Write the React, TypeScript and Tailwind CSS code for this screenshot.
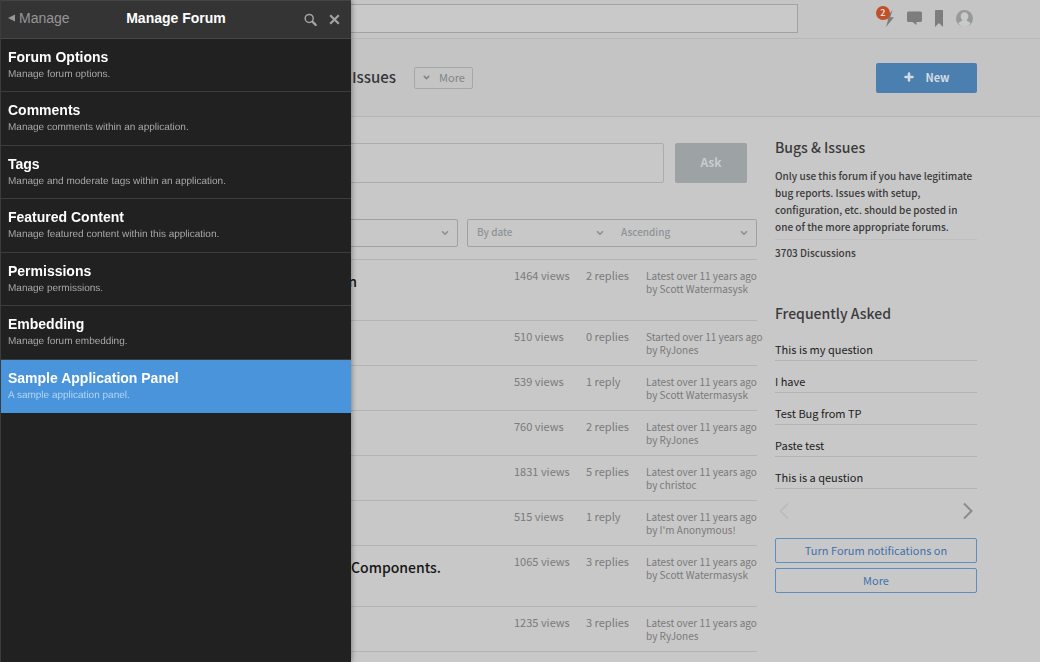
import React from 'react';
import { ChevronDown, Plus } from 'lucide-react';

interface PanelItem {
    title: string;
    description: string;
}

interface Thread {
    title?: string;
    titleAlign?: string;
    tall?: boolean;
    views: string;
    replies: string;
    activity: string;
    author: string;
}

const panelItems: PanelItem[] = [
    { title: 'Forum Options', description: 'Manage forum options.' },
    { title: 'Comments', description: 'Manage comments within an application.' },
    { title: 'Tags', description: 'Manage and moderate tags within an application.' },
    { title: 'Featured Content', description: 'Manage featured content within this application.' },
    { title: 'Permissions', description: 'Manage permissions.' },
    { title: 'Embedding', description: 'Manage forum embedding.' },
    { title: 'Sample Application Panel', description: 'A sample application panel.' }
];

const threads: Thread[] = [
    { title: 'n', titleAlign: 'pr-[157px]', tall: true, views: '1464 views', replies: '2 replies', activity: 'Latest over 11 years ago', author: 'by Scott Watermasysk' },
    { views: '510 views', replies: '0 replies', activity: 'Started over 11 years ago', author: 'by RyJones' },
    { views: '539 views', replies: '1 reply', activity: 'Latest over 11 years ago', author: 'by Scott Watermasysk' },
    { views: '760 views', replies: '2 replies', activity: 'Latest over 11 years ago', author: 'by RyJones' },
    { views: '1831 views', replies: '5 replies', activity: 'Latest over 11 years ago', author: 'by christoc' },
    { views: '515 views', replies: '1 reply', activity: 'Latest over 11 years ago', author: "by I'm Anonymous!" },
    { title: 'Components.', titleAlign: 'pr-[73px]', tall: true, views: '1065 views', replies: '3 replies', activity: 'Latest over 11 years ago', author: 'by Scott Watermasysk' },
    { views: '1235 views', replies: '3 replies', activity: 'Latest over 11 years ago', author: 'by RyJones' }
];

const questions = ['This is my question', 'I have', 'Test Bug from TP', 'Paste test', 'This is a qeustion'];

const AdminPanel: React.FC = () => (
    <aside className="fixed inset-y-0 left-0 z-10 w-[351px] border-l border-[#3c3c3c] bg-[#212121] font-['Liberation_Sans',sans-serif] shadow-[1px_0_5px_rgba(0,0,0,0.35)]">
        <header className="grid h-[39px] grid-cols-[1fr_auto_1fr] items-center border-t border-b border-t-[#444] border-b-[#474747] bg-[#343434] px-[7px] pb-1">
            <button className="flex items-center gap-1 text-sm leading-5 text-[#969696]">
                <svg width="7" height="8" viewBox="0 0 7 8" fill="currentColor" aria-hidden="true">
                    <path d="M0 4 7 0.5v7z" />
                </svg>
                Manage
            </button>
            <h2 className="text-sm font-bold leading-5 text-white">Manage Forum</h2>
            <div className="flex items-center justify-end gap-3 pt-1 pr-1 text-[#a3a3a3]">
                <button aria-label="Search">
                    <svg width="13" height="13" viewBox="0 0 13 13" fill="none" stroke="currentColor" aria-hidden="true">
                        <circle cx="5.2" cy="5.4" r="4" strokeWidth="1.5" />
                        <path d="m8.4 8.6 3.3 3.3" strokeWidth="2.2" strokeLinecap="round" />
                    </svg>
                </button>
                <button aria-label="Close">
                    <svg width="11" height="11" viewBox="0 0 11 11" fill="none" stroke="currentColor" strokeWidth="2.2" aria-hidden="true">
                        <path d="m1.2 1.2 8.6 8.6m0-8.6L1.2 9.8" />
                    </svg>
                </button>
            </div>
        </header>
        <ul className="grid min-h-[374px] auto-rows-fr">
            {panelItems.map((item, i) => (
                <li
                    key={item.title}
                    className={i === panelItems.length - 1 ? 'bg-[#4a94db]' : 'border-b border-[#3c3c3c]'}
                >
                    <a href="#" className="block px-[7px] pt-2">
                        <span className="block text-sm font-bold leading-5 text-white">{item.title}</span>
                        <span
                            className={`block text-[10px] leading-4 [text-rendering:geometricPrecision] ${
                                i === panelItems.length - 1 ? 'text-[#b4d5f3]' : 'text-[#a8a8a8]'
                            }`}
                        >
                            {item.description}
                        </span>
                    </a>
                </li>
            ))}
        </ul>
    </aside>
);

const TopBar: React.FC = () => (
    <div className="border-b border-[#b8b8b8] bg-[#c5c5c5]">
        <div className="mx-auto flex h-[38px] max-w-[914px] items-center justify-between pb-0.5">
            <input
                type="search"
                aria-label="Search"
                className="h-[29px] w-[735px] border border-[#a2a2a2] bg-[#c9c9c9] px-2 outline-none"
            />
            <div className="flex items-center gap-[13px] pr-1 text-[#7d7d7d]">
                <button aria-label="Notifications" className="relative">
                    <svg width="10" height="17" viewBox="0 0 10 17" fill="currentColor" aria-hidden="true">
                        <path d="M8.5 0 1 9.2h3.2L2 17 10 7.3H6.3z" />
                    </svg>
                    <span className="absolute -left-2 -top-1 size-[14px] rounded-full bg-[#c34e28] text-center font-['Noto_Sans_CJK_SC',sans-serif] text-[9px] font-bold leading-[13px] text-[#dedede]">
                        2
                    </span>
                </button>
                <button aria-label="Conversations">
                    <svg width="15" height="14" viewBox="0 0 15 14" fill="currentColor" aria-hidden="true">
                        <path d="M1.5 0.5h12q1.5 0 1.5 1.5v7.5q0 1.5-1.5 1.5H9.5V14l-4-3H1.5Q0 11 0 9.5V2Q0 0.5 1.5 0.5z" />
                    </svg>
                </button>
                <button aria-label="Bookmarks">
                    <svg width="8" height="17" viewBox="0 0 8 17" fill="currentColor" aria-hidden="true">
                        <path d="M0 1q0-1 1-1h6q1 0 1 1v16l-4-4-4 4z" />
                    </svg>
                </button>
                <button aria-label="Profile">
                    <svg width="17" height="17" viewBox="0 0 17 17" aria-hidden="true">
                        <circle cx="8.5" cy="8.5" r="8.5" fill="#969a9d" />
                        <path
                            d="M8.5 2.2c2.5 0 3.8 1.7 3.8 4 0 1.6-.7 2.900-1.700 3.700 0 1.400 3 1.500 4 3.300C13.300 15.600 11 17 8.500 17s-4.800-1.400-6.100-3.800c1-1.800 4-1.900 4-3.300-1-.8-1.700-2.100-1.700-3.700 0-2.300 1.300-4 3.800-4z"
                            fill="#c9c9c9"
                        />
                    </svg>
                </button>
            </div>
        </div>
    </div>
);

const Banner: React.FC = () => (
    <div className="border-b border-[#b5b5b5] bg-[#c4c4c4]">
        <div className="mx-auto flex h-[77px] max-w-[914px] items-center">
            <h1 className="w-[333px] pb-px text-right text-[15px] font-medium leading-6 text-[#363638]">Issues</h1>
            <button className="ml-[18px] flex h-[22px] w-[59px] items-center justify-center gap-2 rounded-xs border border-[#a5a8aa] pb-px text-[11px] leading-4 text-[#7e8488]">
                <ChevronDown size={9} strokeWidth={4} />
                More
            </button>
            <button className="ml-auto flex h-[30px] w-[101px] items-center justify-center gap-2.5 rounded-xs bg-[#4b7fb0] pb-px text-[11px] font-bold leading-4 text-[#d5dbe1]">
                <Plus size={12} strokeWidth={5} />
                New
            </button>
        </div>
    </div>
);

interface DropDownProps {
    label: string;
    value: string;
    className: string;
}

const DropDown: React.FC<DropDownProps> = ({ label, value, className }) => (
    <div className={`relative ${className}`}>
        <select
            aria-label={label}
            className="block h-[23px] w-full appearance-none bg-transparent px-[9px] text-[10px] leading-4 font-medium text-[#8f9396] outline-none"
        >
            <option>{value}</option>
        </select>
        <ChevronDown
            size={10}
            strokeWidth={4}
            className="pointer-events-none absolute top-2 right-[7px] text-[#8b9094]"
        />
    </div>
);

const ThreadTable: React.FC = () => (
    <table className="mt-3 w-full table-fixed border-separate border-spacing-0 border-t border-[#b3b3b3] text-left text-[#7a7a7a]">
        <colgroup>
            <col />
            <col className="w-[72px]" />
            <col className="w-[60px]" />
            <col className="w-[111px]" />
        </colgroup>
        <tbody>
            {threads.map((thread) => (
                <tr key={thread.views} className={thread.tall ? 'h-[61px]' : 'h-[45px]'}>
                    <td className={`border-b border-[#b3b3b3] pt-2 text-right align-top ${thread.titleAlign ?? ''}`}>
                        {thread.title && (
                            <a href="#" className="text-sm font-medium leading-6 text-[#161616]">
                                {thread.title}
                            </a>
                        )}
                    </td>
                    <td className="border-b border-[#b3b3b3] pt-[9px] align-top text-[11px] leading-[13px]">{thread.views}</td>
                    <td className="border-b border-[#b3b3b3] pt-[9px] align-top text-[11px] leading-[13px]">{thread.replies}</td>
                    <td className="border-b border-[#b3b3b3] pt-[9px] align-top text-[10px] leading-[13px] whitespace-nowrap">
                        {thread.activity}
                        <br />
                        {thread.author}
                    </td>
                </tr>
            ))}
        </tbody>
    </table>
);

const Sidebar: React.FC = () => (
    <aside className="w-[202px] shrink-0 pt-[18px] text-[11px] leading-[17px] text-[#3b3b3b]">
        <h3 className="text-sm font-medium leading-6">Bugs &amp; Issues</h3>
        <div className="text-[10px] font-medium leading-[17px]">
            <p className="mt-2 border-b border-[#bfbfbf] pb-1">
                Only use this forum if you have legitimate bug reports. Issues with setup, configuration, etc. should be
                posted in one of the more appropriate forums.
            </p>
            <p className="mt-1">3703 Discussions</p>
        </div>

        <h3 className="mt-10 text-sm font-medium leading-6">Frequently Asked</h3>
        <ul className="mt-1">
            {questions.map((question) => (
                <li key={question} className="border-b border-[#b3b3b3] pt-3 pb-0.5">
                    <a href="#" className="block text-[#1d1d1d]">
                        {question}
                    </a>
                </li>
            ))}
        </ul>
        <div className="mt-3 flex justify-between px-1">
            <button aria-label="Previous" className="text-[#b9b9b9]">
                <svg width="10" height="20" viewBox="0 0 10 20" fill="none" stroke="currentColor" strokeWidth="1.5" aria-hidden="true">
                    <path d="M9 2.5 1.5 10 9 17.5" />
                </svg>
            </button>
            <button aria-label="Next" className="text-[#8b8b8b]">
                <svg width="10" height="20" viewBox="0 0 10 20" fill="none" stroke="currentColor" strokeWidth="2" aria-hidden="true">
                    <path d="M1 2.5 8.5 10 1 17.5" />
                </svg>
            </button>
        </div>
        <div className="mt-[17px] flex flex-col gap-[5px] text-[#4371ac]">
            <button className="h-[25px] rounded-xs border border-[#5a8fc0] pb-px">Turn Forum notifications on</button>
            <button className="h-[25px] rounded-xs border border-[#5a8fc0] pb-px">More</button>
        </div>
    </aside>
);

const App: React.FC = () => {
    return (
        <div className="min-h-screen bg-[#c8c8c8] font-['Noto_Sans_CJK_SC',sans-serif]">
            <AdminPanel />
            <TopBar />
            <Banner />
            <div className="mx-auto flex max-w-[914px] gap-[18px]">
                <main className="min-w-0 flex-1 pt-[26px]">
                    <form className="flex gap-[11px] pr-2.5">
                        <input
                            type="text"
                            aria-label="Question"
                            className="h-10 min-w-0 flex-1 rounded-xs border border-[#aaadaf] px-3 outline-none"
                        />
                        <button className="h-10 w-[72px] rounded-xs bg-[#9da2a5] pb-0.5 text-xs font-bold text-[#c9cccd]">Ask</button>
                    </form>
                    <div className="mt-9 flex h-7 gap-[9px]">
                        <DropDown label="Filter" value="" className="flex-1 rounded-xs border border-[#9fa2a4]" />
                        <div className="flex w-[290px] rounded-xs border border-[#9fa2a4]">
                            <DropDown label="Sort by" value="By date" className="flex-1" />
                            <DropDown label="Sort order" value="Ascending" className="flex-1" />
                        </div>
                    </div>
                    <ThreadTable />
                </main>
                <Sidebar />
            </div>
        </div>
    );
};

export default App;
